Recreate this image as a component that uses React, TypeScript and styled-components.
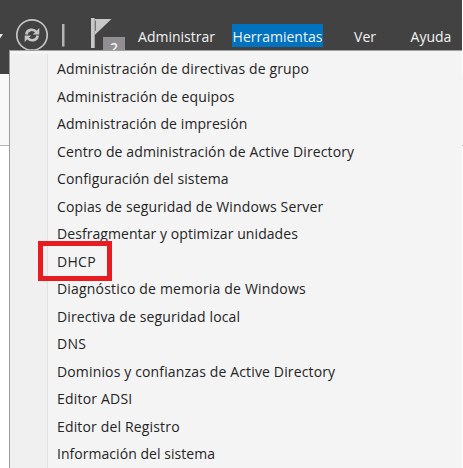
import React from "react";
import styled, { createGlobalStyle } from "styled-components";

const Global = createGlobalStyle`
  html, body { margin: 0; padding: 0; }
  body { width: 463px; height: 468px; overflow: hidden; background: #fcfcfc; }
  * { box-sizing: border-box; }
`;

const Window = styled.div`
  position: relative;
  width: 463px;
  height: 468px;
  overflow: hidden;
  background: #fff;
  font-family: "Open Sans", "Noto Sans", sans-serif;
`;

const Header = styled.header`
  display: flex;
  width: 462px;
  height: 74px;
  background: #424242;
`;

const Tools = styled.div`
  width: 126px;
  height: 52px;
  flex: none;
  svg { display: block; }
`;

const MenuBar = styled.nav`
  display: flex;
  align-items: flex-start;
  padding: 24px 0 0 7px;
`;

const MenuTitle = styled.span<{ $width: number; $gap: number; $active?: boolean }>`
  width: ${(p) => p.$width}px;
  height: 23px;
  margin-right: ${(p) => p.$gap}px;
  flex: none;
  text-align: center;
  white-space: nowrap;
  font-size: 14px;
  line-height: 25px;
  color: #f2f2f2;
  background: ${(p) => (p.$active ? "#0072c0" : "transparent")};
`;

const Toolbar = styled.div`
  height: 72px;
  background: #f8f8f8;
  border-bottom: 1px solid #b4b4b4;
`;

const Dropdown = styled.div`
  position: absolute;
  top: 50px;
  left: 9px;
  width: 453px;
  height: 418px;
  display: flex;
  border-top: 1px solid #a0a0a0;
  border-left: 1px solid #9c9c9c;
  background: #f4f4f4;
`;

const IconGutter = styled.div`
  width: 38px;
  margin-top: 3px;
  flex: none;
  background: #f0f0f0;
  border-right: 1px solid #e2e2e2;
`;

const Items = styled.ul`
  list-style: none;
  margin: 0;
  padding: 4.4px 0 0 9px;
`;

const Item = styled.li<{ $spacing: number }>`
  height: 27.5px;
  line-height: 27.5px;
  font-size: 14px;
  white-space: nowrap;
  letter-spacing: ${(p) => p.$spacing}px;
  color: #242424;
`;

const Highlight = styled.div`
  position: absolute;
  top: 241px;
  left: 38px;
  width: 74px;
  height: 40px;
  border: 5px solid #e81c20;
`;

const entries: [string, number][] = [
  ["Administración de directivas de grupo", 0.135],
  ["Administración de equipos", 0.13],
  ["Administración de impresión", 0.09],
  ["Centro de administración de Active Directory", 0.12],
  ["Configuración del sistema", 0.12],
  ["Copias de seguridad de Windows Server", 0.14],
  ["Desfragmentar y optimizar unidades", 0.07],
  ["DHCP", 0.3],
  ["Diagnóstico de memoria de Windows", 0.19],
  ["Directiva de seguridad local", 0.13],
  ["DNS", 0.3],
  ["Dominios y confianzas de Active Directory", 0.145],
  ["Editor ADSI", 0.2],
  ["Editor del Registro", 0.16],
  ["Información del sistema", 0.04],
];

const ToolIcons = () => (
  <svg width="126" height="52" viewBox="0 0 126 52">
    <path d="M-3 34H3L0 38.5z" fill="#e8e8e8" />
    <circle cx="32" cy="35" r="15.2" fill="none" stroke="#c6c6c6" strokeWidth="1.7" />
    <g fill="none" stroke="#c6c6c6" strokeWidth="2.6">
      <path d="M26.300 34.500C27 29 33.500 28.500 36.500 32" />
      <path d="M37.700 35.500C37 41 30.500 41.500 27.500 38" />
    </g>
    <path d="M39.300 28V34.500H32.800zM24.700 42V35.500H31.200z" fill="#c6c6c6" />
    <path d="M62 24h2.500v22.500H62z" fill="#b5b5b5" />
    <path d="M91 18h3.700v30H91z" fill="#c8c8c8" />
    <path d="M94.700 19H111.500L94.700 35z" fill="#c8c8c8" />
    <path d="M95.500 20.500V31" stroke="#777" strokeWidth="1" />
    <path d="M103 37h22v15h-22z" fill="#928f93" />
    <text x="114" y="53" textAnchor="middle" fontFamily="Open Sans" fontSize="14" fontWeight="600" fill="#f0f0f0">2</text>
  </svg>
);

export default function App() {
  return (
    <Window>
      <Global />
      <Header>
        <Tools><ToolIcons /></Tools>
        <MenuBar>
          <MenuTitle $width={87} $gap={12}>Administrar</MenuTitle>
          <MenuTitle $width={91} $gap={25} $active>Herramientas</MenuTitle>
          <MenuTitle $width={34} $gap={23}>Ver</MenuTitle>
          <MenuTitle $width={52} $gap={0}>Ayuda</MenuTitle>
        </MenuBar>
      </Header>
      <Toolbar />
      <Dropdown>
        <IconGutter />
        <Items>
          {entries.map(([label, spacing]) => (
            <Item key={label} $spacing={spacing}>{label}</Item>
          ))}
        </Items>
      </Dropdown>
      <Highlight />
    </Window>
  );
}
